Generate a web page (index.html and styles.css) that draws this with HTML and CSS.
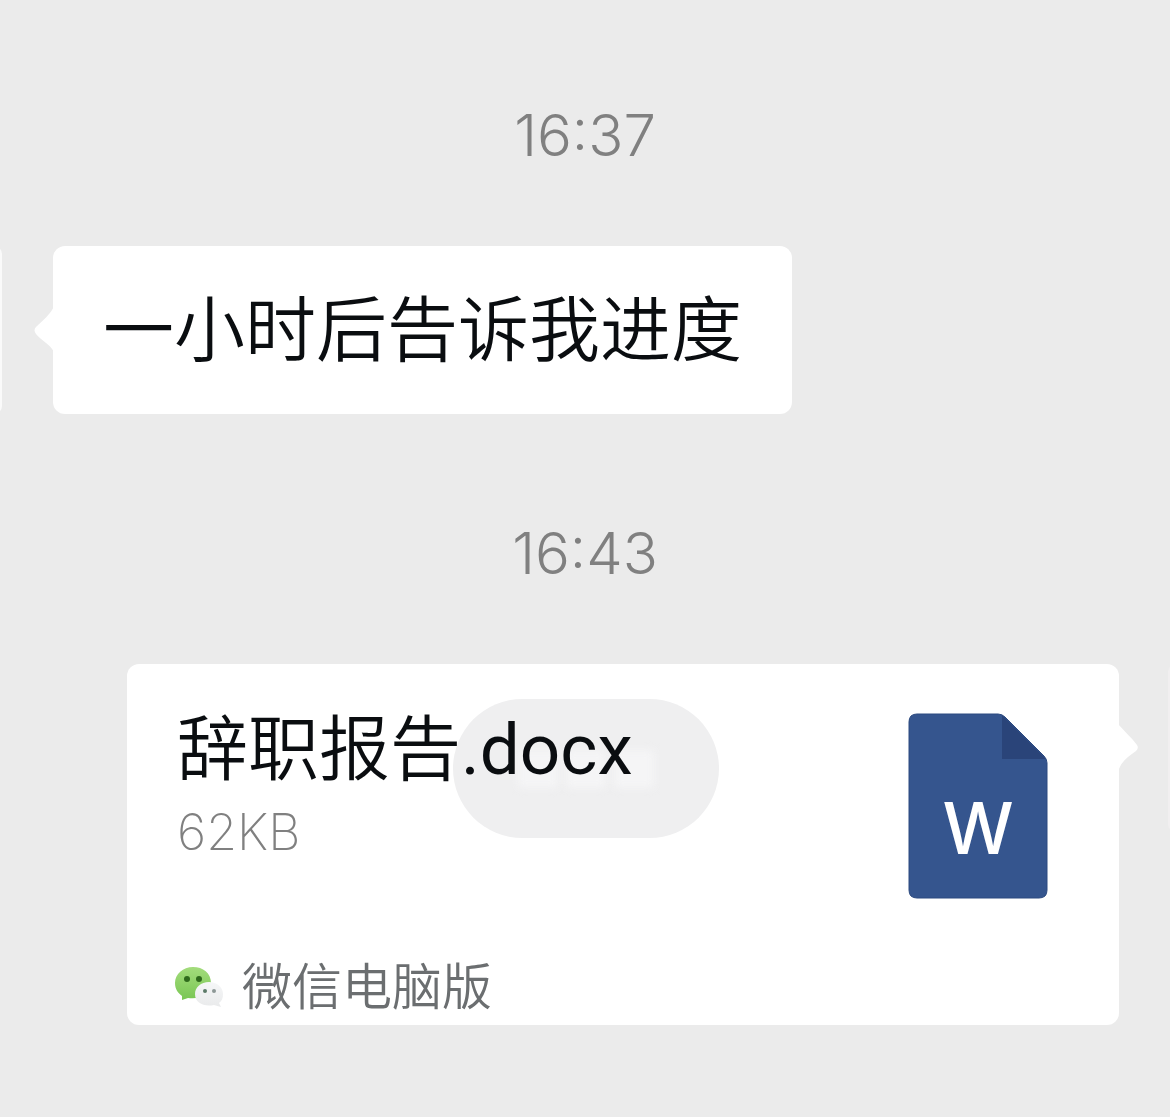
FILE: index.html
```
<!DOCTYPE html>
<html lang="zh-CN">
<head>
    <meta charset="UTF-8">
    <meta name="viewport" content="width=device-width, initial-scale=1.0">
    <title>微信</title>
    <link rel="stylesheet" href="styles.css">
</head>
<body>
    <main class="chat">
        <time class="time">16:37</time>

        <div class="row row-in">
            <div class="avatar"></div>
            <div class="bubble">
                <svg class="tail tail-left" viewBox="0 0 20 48"><path d="M20 0 C17 8 9 14 2 21 Q-1 24 2 28 C8 35 16 38 20 46 Z" fill="#fff"/></svg>
                <p class="text">一小时后告诉我进度</p>
            </div>
        </div>

        <time class="time">16:43</time>

        <div class="row row-out">
            <div class="card">
                <svg class="tail tail-right" viewBox="0 0 20 48"><path d="M0 0 C6 7 13 13 19 21 Q21 24 18 27 C10 33 3 37 0 48 Z" fill="#fff"/></svg>
                <div class="toast"><i class="smudge"></i><i class="smudge"></i><i class="smudge"></i></div>
                <div class="file">
                    <div class="info">
                        <p class="text">辞职报告<span class="ext">.docx</span></p>
                        <p class="size">62KB</p>
                    </div>
                    <div class="doc">
                        <svg class="doc-shape" viewBox="0 0 140 186">
                            <path d="M9 1 H90 Q94 1 97 4 L136 43 Q139 46 139 50 V177 Q139 185 131 185 H9 Q1 185 1 177 V9 Q1 1 9 1 Z" fill="#35558e" stroke="#2c4a80" stroke-width="1"/>
                            <path d="M94 2 L138 46 H94 Z" fill="#2a4479"/>
                        </svg>
                        <span class="doc-letter">W</span>
                    </div>
                </div>
                <div class="source">
                    <svg class="wechat" viewBox="3 2 50 42">
                        <defs>
                            <linearGradient id="green" x1="0" y1="0" x2="0" y2="1">
                                <stop offset="0" stop-color="#a3dc7c"/>
                                <stop offset="1" stop-color="#79c653"/>
                            </linearGradient>
                            <linearGradient id="grey" x1="0" y1="0" x2="0" y2="1">
                                <stop offset="0" stop-color="#f6f7f8"/>
                                <stop offset="1" stop-color="#e9eaeb"/>
                            </linearGradient>
                        </defs>
                        <path d="M19 2 C9 2 1 9 1 18 C1 24 4 28 8 31 L8 35 L14 33 C27 35 37 28 37 18 C37 8 29 2 19 2 Z" fill="url(#green)"/>
                        <circle cx="13" cy="14" r="3" fill="#2f6a1c"/>
                        <circle cx="25" cy="14" r="3" fill="#2f6a1c"/>
                        <path d="M35 17 C27 17 21 22 21 29 C21 38 30 42 40 40 L47 42 L45 38 C48 36 49 33 49 29 C49 22 43 17 35 17 Z" fill="url(#grey)"/>
                        <circle cx="31" cy="26" r="2" fill="#5c7a68"/>
                        <circle cx="40" cy="26" r="2" fill="#8d9896"/>
                    </svg>
                    <span>微信电脑版</span>
                </div>
            </div>
            <div class="avatar"></div>
        </div>
    </main>
</body>
</html>
```

FILE: styles.css
```
* {
    box-sizing: border-box;
}
body {
    margin: 0;
    background: #ebebeb;
    font-family: Roboto, "Noto Sans CJK SC", sans-serif;
    color: #0a0d10;
}
p {
    margin: 0;
}
.chat {
    display: flex;
    flex-direction: column;
    padding-top: 100px;
    overflow: hidden;
}
.time {
    margin-bottom: 76px;
    font-family: Inter, sans-serif;
    font-size: 58px;
    font-weight: 300;
    line-height: 70px;
    text-align: center;
    color: #808080;
}
.row {
    display: flex;
    align-items: flex-start;
}
.row-in {
    gap: 51px;
    margin-left: -166px;
    margin-bottom: 104px;
}
.row-out {
    gap: 49px;
    margin-left: 127px;
    margin-right: -166px;
}
.avatar {
    flex: none;
    width: 168px;
    height: 168px;
    border-radius: 8px;
    background: #fafafa;
}
.row-out .avatar {
    background: #f1eff0;
}
.bubble,
.card {
    position: relative;
    background: #fff;
    border-radius: 12px;
}
.bubble {
    padding: 33px 50px 31px;
}
.text {
    font-size: 71px;
    font-weight: 350;
    line-height: 104px;
    white-space: nowrap;
}
.ext {
    font-weight: 400;
}
.tail {
    position: absolute;
    width: 20px;
    height: 48px;
    top: 60px;
}
.tail-left {
    left: -19px;
}
.tail-right {
    right: -19px;
}
.card {
    flex: 1;
    padding: 34px 71px 2px 50px;
}
.toast {
    position: absolute;
    top: 35px;
    left: 326px;
    display: flex;
    justify-content: center;
    align-items: center;
    gap: 8px;
    width: 266px;
    height: 139px;
    border-radius: 70px;
    background: #efeff0;
}
.smudge {
    width: 40px;
    height: 38px;
    background: #f5f5f6;
    filter: blur(4px);
}
.file {
    position: relative;
    display: flex;
    justify-content: space-between;
}
.size {
    font-family: Inter, sans-serif;
    font-size: 50px;
    font-weight: 200;
    line-height: 60px;
    color: #808080;
}
.doc {
    position: relative;
    width: 140px;
    height: 186px;
    margin-top: 15px;
}
.doc-shape {
    display: block;
    width: 100%;
}
.doc-letter {
    position: absolute;
    top: 70px;
    left: 0;
    width: 100%;
    font-family: Inter, sans-serif;
    font-size: 71px;
    font-weight: 500;
    line-height: 90px;
    text-align: center;
    color: #fff;
}
.source {
    display: flex;
    align-items: center;
    gap: 15px;
    margin-top: 54px;
    font-size: 50px;
    font-weight: 350;
    line-height: 70px;
    color: #6b6e70;
}
.wechat {
    width: 50px;
    height: 42px;
    overflow: visible;
}
```
